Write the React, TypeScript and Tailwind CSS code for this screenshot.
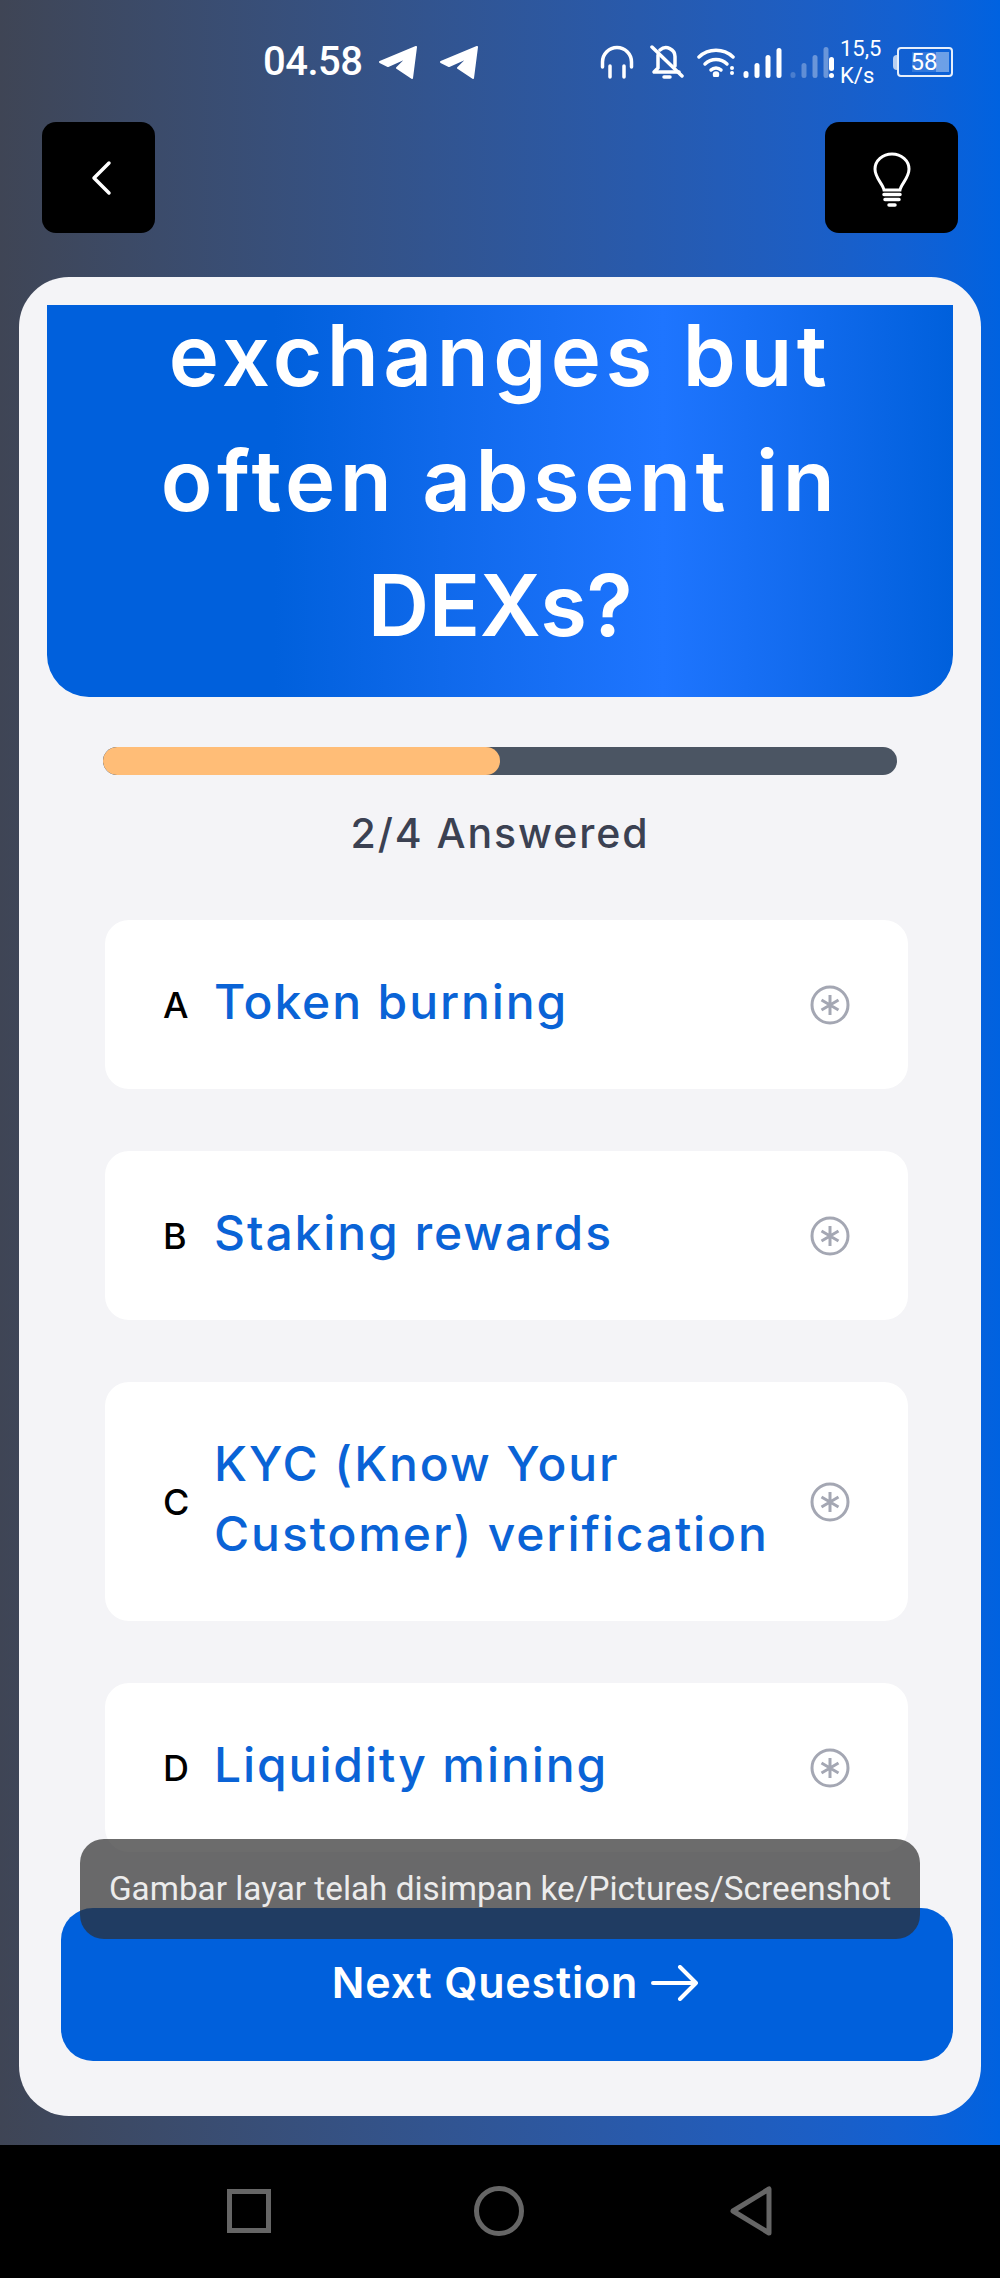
const poppins = "font-['Inter','Liberation_Sans',sans-serif]";

const TelegramIcon = () => (
  <svg width="38" height="33" viewBox="0 0 38 33" fill="#fff" stroke="#fff" strokeWidth="2" strokeLinejoin="round">
    <path d="M1 16 37 1 33 32 18 22 29 11 9 20Z" />
  </svg>
);

const SignalCluster = () => (
  <svg width="136" height="42" viewBox="0 0 136 42" fill="none" className="-ml-[7px] shrink-0">
    <g fill="#fff">
      <circle cx="4" cy="27" r="2" />
      <circle cx="4" cy="32" r="2" />
      <rect x="15.5" y="30" width="5" height="7" rx="2.5" />
      <rect x="26.5" y="22" width="5" height="15" rx="2.5" />
      <rect x="37.5" y="14" width="5" height="23" rx="2.5" />
      <rect x="48.5" y="7" width="5" height="30" rx="2.5" />
      <rect x="101" y="16" width="5" height="14" rx="2.5" />
      <circle cx="103.5" cy="34.5" r="2.5" />
    </g>
    <g fill="#fff">
      <rect x="62.5" y="31" width="5" height="6" rx="2.5" opacity="0.2" />
      <rect x="73.5" y="22" width="5" height="15" rx="2.5" opacity="0.3" />
      <rect x="84.5" y="14" width="5" height="23" rx="2.5" opacity="0.35" />
      <rect x="95.5" y="6" width="5" height="31" rx="2.5" opacity="0.35" />
    </g>
  </svg>
);

const StatusBar = () => (
  <div className="flex h-[44px] items-center pl-[263px] font-['Roboto',sans-serif] text-white">
    <span className="w-[98px] text-[40px] font-medium leading-none tracking-[-0.5px]">04.58</span>
    <div className="ml-[18px] flex gap-[23px]">
      <TelegramIcon />
      <TelegramIcon />
    </div>
    <svg width="34" height="34" viewBox="0 0 34 34" fill="none" stroke="#fff" strokeWidth="3.5" strokeLinecap="round" className="ml-[122px]">
      <path d="M2.5 22V17a14.5 14.5 0 0 1 29 0v5" />
      <path d="M10 21v11M24 21v11" />
    </svg>
    <svg width="34" height="35" viewBox="0 0 34 35" fill="none" stroke="#fff" strokeWidth="3.5" strokeLinecap="round" strokeLinejoin="round" className="ml-[16px]">
      <path d="M8 10v13l-4 4h25" />
      <path d="M10 5a9 9 0 0 1 15 7v9" />
      <path d="M2 2l30 29" />
      <path d="M14 32h6" />
    </svg>
    <svg width="38" height="30" viewBox="0 0 38 30" fill="none" stroke="#fff" strokeWidth="3.5" strokeLinecap="round" className="ml-[13px]">
      <path d="M2 10a25 25 0 0 1 34 0" />
      <path d="M8 17a16 16 0 0 1 22 0" />
      <path d="M14 23a7 7 0 0 1 10 0" />
      <circle cx="19" cy="27.5" r="1.5" fill="#fff" />
    </svg>
    <SignalCluster />
    <div className="-ml-[24px] flex w-[44px] flex-col items-start text-[22px] leading-[27px]">
      <span>15,5</span>
      <span>K/s</span>
    </div>
    <div className="ml-[9px] flex items-center">
      <div className="h-[15px] w-[4px] rounded-l-sm bg-white/70" />
      <div className="flex h-[30px] w-[56px] items-stretch rounded-[4px] border-[2.5px] border-white/90 py-[3px] pl-[13px] pr-[2px]">
        <div className="flex w-[24px] items-center justify-center bg-white/15 text-[24px] leading-none">58</div>
        <div className="flex-1 bg-white/40" />
      </div>
    </div>
  </div>
);

const TopBar = () => (
  <div className="mt-[38px] flex items-center justify-between pl-[42px] pr-[42px]">
    <button className="flex h-[111px] w-[113px] items-center justify-center rounded-[14px] bg-black">
      <svg width="26" height="36" viewBox="0 0 26 36" fill="none" stroke="#fff" strokeWidth="3.5" strokeLinecap="round" strokeLinejoin="round" className="ml-[6px]">
        <path d="M20 3 5 18l15 15" />
      </svg>
    </button>
    <button className="flex h-[111px] w-[133px] items-center justify-center rounded-[14px] bg-black">
      <svg width="38" height="56" viewBox="0 0 38 56" fill="none" stroke="#fff" strokeWidth="3" strokeLinecap="round" className="mt-[4px]">
        <path d="M11 38c-1-6-9-12-9-21a17 15 0 0 1 34 0c0 9-8 15-9 21Z" />
        <path d="M11 42.5h16M12 47.5h14" strokeWidth="3.5" />
        <path d="M16 53h6" strokeWidth="3.5" />
      </svg>
    </button>
  </div>
);

const CheckDot = () => (
  <svg width="40" height="40" viewBox="0 0 40 40" fill="none" stroke="#a4a7b3" className="shrink-0">
    <circle cx="20" cy="20" r="18" strokeWidth="3" />
    <path d="M20 10v20M11.5 15l17 10M28.5 15l-17 10" strokeWidth="3" />
  </svg>
);

const options = [
  { letter: "A", lines: ["Token burning"] },
  { letter: "B", lines: ["Staking rewards"] },
  { letter: "C", lines: ["KYC (Know Your", "Customer) verification"] },
  { letter: "D", lines: ["Liquidity mining"] },
];

const OptionRow = ({ letter, lines }: { letter: string; lines: string[] }) => (
  <div className="flex items-center justify-between rounded-[24px] bg-white py-[49.5px] pl-[58px] pr-[58px]">
    <div className="flex items-center">
      <span className="w-[51px] text-[36px] font-medium text-black">{letter}</span>
      <div className="-mt-[3px] mb-[3px] text-[48px] font-medium leading-[70px] tracking-[1.9px] text-[#0a63d6]">
        {lines.map((line) => (
          <div key={line}>{line}</div>
        ))}
      </div>
    </div>
    <CheckDot />
  </div>
);

export default function App() {
  return (
    <div className={`flex h-[2278px] w-[1000px] flex-col overflow-hidden ${poppins}`}>
      <div className="relative h-[2145px] bg-linear-to-r from-[#3f4555] to-[#0062e0] pt-[40px]">
        <StatusBar />
        <TopBar />
        <div className="relative mx-[19px] mt-[44px] h-[1839px] rounded-[50px] bg-[#f4f4f7] px-[28px] pt-[28px]">
          <div className="flex h-[392px] flex-col items-center justify-end overflow-hidden rounded-b-[42px] bg-linear-to-r from-[#0060dc] from-[25%] via-[#1e75ff] via-[68%] to-[#0060dc] pb-[29px] text-center text-[85px] font-semibold leading-[125px] tracking-[4.5px] text-white">
            <div>exchanges but</div>
            <div>often absent in</div>
            <div className="tracking-[-0.5px]">DEXs?</div>
          </div>

          <div className="ml-[56px] mt-[50px] h-[28px] w-[794px] overflow-hidden rounded-full bg-[#4b5563]">
            <div className="h-full w-[397px] rounded-full bg-[#ffbd77]" />
          </div>
          <div className="mt-[30px] text-center text-[41px] font-medium leading-[56px] tracking-[1.9px] text-[#3b4152]">2/4 Answered</div>

          <div className="ml-[58px] mr-[45px] mt-[59px] flex flex-col gap-[62px]">
            {options.map((option) => (
              <OptionRow key={option.letter} letter={option.letter} lines={option.lines} />
            ))}
          </div>

          <button className="absolute bottom-[55px] left-[42px] flex h-[153px] w-[892px] items-center justify-center gap-[13px] rounded-[32px] bg-[#0060dc] pb-[4px] pl-[16px] text-[43px] font-semibold tracking-[0.8px] text-white">
            Next Question
            <svg width="47" height="36" viewBox="0 0 47 36" fill="none" stroke="#fff" strokeWidth="4" strokeLinecap="round" strokeLinejoin="round">
              <path d="M2 18h43M29 2l16 16-16 16" />
            </svg>
          </button>

          <div className="absolute bottom-[177px] left-[61px] flex h-[100px] w-[840px] items-center justify-center rounded-[24px] bg-[#2d2d2d]/70 font-['Roboto',sans-serif] text-[33.3px] text-[#ececec]">
            Gambar layar telah disimpan ke/Pictures/Screenshot
          </div>
        </div>
      </div>

      <div className="flex h-[133px] items-center justify-center bg-black pb-[2px]">
        <div className="h-[44px] w-[44px] border-[5px] border-[#666]" />
        <div className="ml-[203px] h-[50px] w-[50px] rounded-full border-[5px] border-[#666]" />
        <svg width="44" height="50" viewBox="0 0 44 50" fill="none" stroke="#666" strokeWidth="5" strokeLinejoin="round" className="ml-[205px]">
          <path d="M40 3v44L4 25Z" />
        </svg>
      </div>
    </div>
  );
}
